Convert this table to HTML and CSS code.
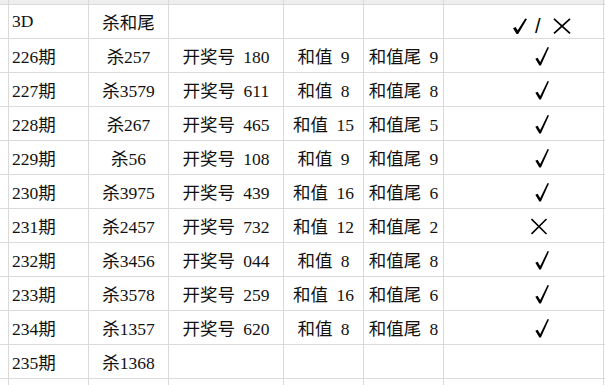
FILE: index.html
```html
<!DOCTYPE html>
<html lang="zh-CN">
<head>
<meta charset="utf-8">
<title>3D 杀和尾</title>
<link rel="stylesheet" href="styles.css">
</head>
<body>
<div class="sheet">
  <div class="row top"><div></div><div></div><div></div><div></div><div></div><div></div><div></div><div></div></div>
  <div class="row"><div></div><div class="a">3D</div><div class="b">杀和尾</div><div></div><div></div><div></div><div class="f hd" aria-label="√ / ×"><svg class="hok" viewBox="0 0 14 16" role="img" aria-label="√"><polygon points="0,10.2 2.6,9 4.7,12.2 12.2,0.4 14,1.1 5.2,15.9 3.5,15.9"/></svg><span class="slash">/</span><svg class="hno" viewBox="0 0 18 16" role="img" aria-label="×"><path d="M1 0.8 L17 15.4 M17 0.8 L1 15.4"/></svg></div><div></div></div>
  <div class="row"><div></div><div class="a">226期</div><div class="b">杀257</div><div class="c">开奖号 180</div><div class="d">和值 9</div><div class="d">和值尾 9</div><div class="f"><svg class="ok" viewBox="0 0 18 20"><polygon points="4.3,12.8 6.6,11.8 9.2,16 16.6,1 18,1.6 9.9,19.6 8.3,19.6"/></svg></div><div></div></div>
  <div class="row"><div></div><div class="a">227期</div><div class="b">杀3579</div><div class="c">开奖号 611</div><div class="d">和值 8</div><div class="d">和值尾 8</div><div class="f"><svg class="ok" viewBox="0 0 18 20"><polygon points="4.3,12.8 6.6,11.8 9.2,16 16.6,1 18,1.6 9.9,19.6 8.3,19.6"/></svg></div><div></div></div>
  <div class="row"><div></div><div class="a">228期</div><div class="b">杀267</div><div class="c">开奖号 465</div><div class="d">和值 15</div><div class="d">和值尾 5</div><div class="f"><svg class="ok" viewBox="0 0 18 20"><polygon points="4.3,12.8 6.6,11.8 9.2,16 16.6,1 18,1.6 9.9,19.6 8.3,19.6"/></svg></div><div></div></div>
  <div class="row"><div></div><div class="a">229期</div><div class="b">杀56</div><div class="c">开奖号 108</div><div class="d">和值 9</div><div class="d">和值尾 9</div><div class="f"><svg class="ok" viewBox="0 0 18 20"><polygon points="4.3,12.8 6.6,11.8 9.2,16 16.6,1 18,1.6 9.9,19.6 8.3,19.6"/></svg></div><div></div></div>
  <div class="row"><div></div><div class="a">230期</div><div class="b">杀3975</div><div class="c">开奖号 439</div><div class="d">和值 16</div><div class="d">和值尾 6</div><div class="f"><svg class="ok" viewBox="0 0 18 20"><polygon points="4.3,12.8 6.6,11.8 9.2,16 16.6,1 18,1.6 9.9,19.6 8.3,19.6"/></svg></div><div></div></div>
  <div class="row"><div></div><div class="a">231期</div><div class="b">杀2457</div><div class="c">开奖号 732</div><div class="d">和值 12</div><div class="d">和值尾 2</div><div class="f"><svg class="no" viewBox="0 0 18 20"><path d="M0.5 3 L15.5 18 M15.5 3 L0.5 18"/></svg></div><div></div></div>
  <div class="row"><div></div><div class="a">232期</div><div class="b">杀3456</div><div class="c">开奖号 044</div><div class="d">和值 8</div><div class="d">和值尾 8</div><div class="f"><svg class="ok" viewBox="0 0 18 20"><polygon points="4.3,12.8 6.6,11.8 9.2,16 16.6,1 18,1.6 9.9,19.6 8.3,19.6"/></svg></div><div></div></div>
  <div class="row"><div></div><div class="a">233期</div><div class="b">杀3578</div><div class="c">开奖号 259</div><div class="d">和值 16</div><div class="d">和值尾 6</div><div class="f"><svg class="ok" viewBox="0 0 18 20"><polygon points="4.3,12.8 6.6,11.8 9.2,16 16.6,1 18,1.6 9.9,19.6 8.3,19.6"/></svg></div><div></div></div>
  <div class="row"><div></div><div class="a">234期</div><div class="b">杀1357</div><div class="c">开奖号 620</div><div class="d">和值 8</div><div class="d">和值尾 8</div><div class="f"><svg class="ok" viewBox="0 0 18 20"><polygon points="4.3,12.8 6.6,11.8 9.2,16 16.6,1 18,1.6 9.9,19.6 8.3,19.6"/></svg></div><div></div></div>
  <div class="row"><div></div><div class="a">235期</div><div class="b">杀1368</div><div></div><div></div><div></div><div></div><div></div></div>
  <div class="row"><div></div><div></div><div></div><div></div><div></div><div></div><div></div><div></div></div>
</div>
</body>
</html>
```

FILE: styles.css
```css
html, body {
  margin: 0;
  background: #ffffff;
}

.sheet {
  display: grid;
  grid-template-columns: 8px 79px 79px 114px 79px 79px 159px 1fr;
  grid-template-rows: 4px repeat(11, 33px) 1fr;
  gap: 1px;
  width: 605px;
  height: 385px;
  overflow: hidden;
  background: #dadada;
  font-family: "Liberation Serif", "Noto Sans CJK SC", serif;
  font-size: 17.5px;
  color: #111111;
}

.row {
  display: contents;
}

.row > div {
  background: #ffffff;
  display: flex;
  align-items: center;
  white-space: pre;
  min-width: 0;
}

.row.top > div {
  background: #eeeeee;
}

.a {
  padding-left: 3px;
}

.b,
.c,
.d {
  justify-content: center;
}

.c,
.d {
  word-spacing: 4px;
}

.row > .f {
  justify-content: center;
  padding-left: 33px;
}

.row > .hd {
  justify-content: flex-start;
  padding-left: 69px;
  padding-top: 8px;
}

.hok {
  width: 14px;
  height: 16px;
  fill: #000000;
}

.slash {
  margin-left: 8px;
  font-family: "Liberation Sans", sans-serif;
  font-size: 20px;
  line-height: 1;
  color: #000000;
}

.hno {
  margin-left: 12px;
  width: 18px;
  height: 16px;
  fill: none;
  stroke: #000000;
  stroke-width: 1.7;
}

.ok {
  width: 18px;
  height: 20px;
  fill: #000000;
}

.no {
  width: 18px;
  height: 20px;
  fill: none;
  stroke: #000000;
  stroke-width: 1.6;
}
```
